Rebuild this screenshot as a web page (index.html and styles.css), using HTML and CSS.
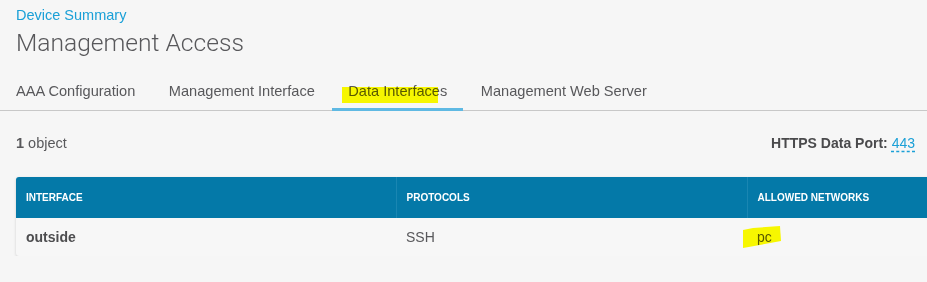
FILE: index.html
```html
<!DOCTYPE html>
<html lang="en">

<head>
    <meta charset="UTF-8">
    <meta name="viewport" content="width=device-width, initial-scale=1.0">
    <link rel="stylesheet" href="styles.css">
    <title>Management Access</title>
</head>

<body>

    <header class="page-head">
        <a href="#" class="crumb">Device Summary</a>
        <h1 class="title">Management Access</h1>
    </header>

    <nav class="tabs">
        <a href="#" class="tab">AAA Configuration</a>
        <a href="#" class="tab">Management Interface</a>
        <a href="#" class="tab active">Data Interfaces<span class="mark mark-tab"></span></a>
        <a href="#" class="tab">Management Web Server</a>
    </nav>

    <section class="toolbar">
        <span class="count"><b>1</b> object</span>
        <span class="port"><b>HTTPS Data Port:</b> <a href="#" class="port-link">443</a></span>
    </section>

    <section class="card">
        <table class="grid">
            <colgroup>
                <col class="col-interface">
                <col class="col-protocols">
                <col>
            </colgroup>
            <thead>
                <tr>
                    <th>Interface</th>
                    <th>Protocols</th>
                    <th>Allowed Networks</th>
                </tr>
            </thead>
            <tbody>
                <tr>
                    <td class="name">outside</td>
                    <td>SSH</td>
                    <td class="networks">pc<span class="mark mark-cell"></span></td>
                </tr>
            </tbody>
        </table>
    </section>

</body>

</html>
```

FILE: styles.css
```css
* {
    box-sizing: border-box;
}

body {
    margin: 0;
    background-color: #f6f6f6;
    font-family: "Liberation Sans", Arial, Helvetica, sans-serif;
    font-size: 14.5px;
    color: #58585b;
    overflow: hidden;
}

a {
    text-decoration: none;
}

.page-head {
    padding: 5px 16px 0;
}

.crumb {
    display: block;
    line-height: 20px;
    color: #1ba0d7;
}

.title {
    margin: 3px 0 0;
    font-family: Roboto, "Liberation Sans", sans-serif;
    font-weight: 300;
    font-size: 24.6px;
    line-height: 30px;
    color: #58585b;
}

.tabs {
    display: flex;
    gap: 1.5px;
    margin-top: 13px;
    border-bottom: 1px solid #c8c8c8;
}

.tab {
    position: relative;
    padding: 10px 16px 7px;
    line-height: 20px;
    font-size: 14.6px;
    margin-bottom: -1px;
    border-bottom: 3px solid transparent;
    color: #58585b;
}

.tab.active {
    border-bottom-color: #5fb9e3;
}

.mark {
    position: absolute;
    background-color: #ffff00;
    mix-blend-mode: multiply;
}

.mark-tab {
    left: 10px;
    top: 16px;
    width: 96px;
    height: 16px;
}

.toolbar {
    display: flex;
    justify-content: space-between;
    align-items: center;
    margin-top: 22px;
    padding: 0 12px 0 16px;
    line-height: 20px;
}

.port {
    font-size: 14px;
    color: #4a4a4c;
}

.port-link {
    color: #1ba0d7;
    text-decoration: underline dashed #1ba0d7;
    text-underline-offset: 3px;
}

.card {
    width: 960px;
    margin: 24px 0 0 16px;
    border-radius: 3px;
    background-color: #f7f7f7;
    box-shadow: 0 1px 3px rgba(0, 0, 0, 0.16);
    overflow: hidden;
}

.grid {
    width: 100%;
    table-layout: fixed;
    border-collapse: collapse;
    border-spacing: 0;
}

.col-interface {
    width: 380px;
}

.col-protocols {
    width: 351px;
}

.grid th {
    height: 41px;
    padding: 0 10px;
    text-align: left;
    font-size: 10px;
    font-weight: bold;
    text-transform: uppercase;
    color: #ffffff;
    background-color: #0479a8;
}

.grid th + th {
    border-left: 1px solid #1a86b2;
}

.grid td {
    height: 38px;
    padding: 0 10px;
    font-size: 14px;
    color: #58585b;
}

.grid td.name {
    font-weight: bold;
    color: #4d4d4f;
}

.networks {
    position: relative;
}

.mark-cell {
    left: -4px;
    top: 8px;
    width: 38px;
    height: 22px;
    clip-path: polygon(0 4px, 10px 2px, 37px 0, 38px 15px, 0 22px);
}
```
